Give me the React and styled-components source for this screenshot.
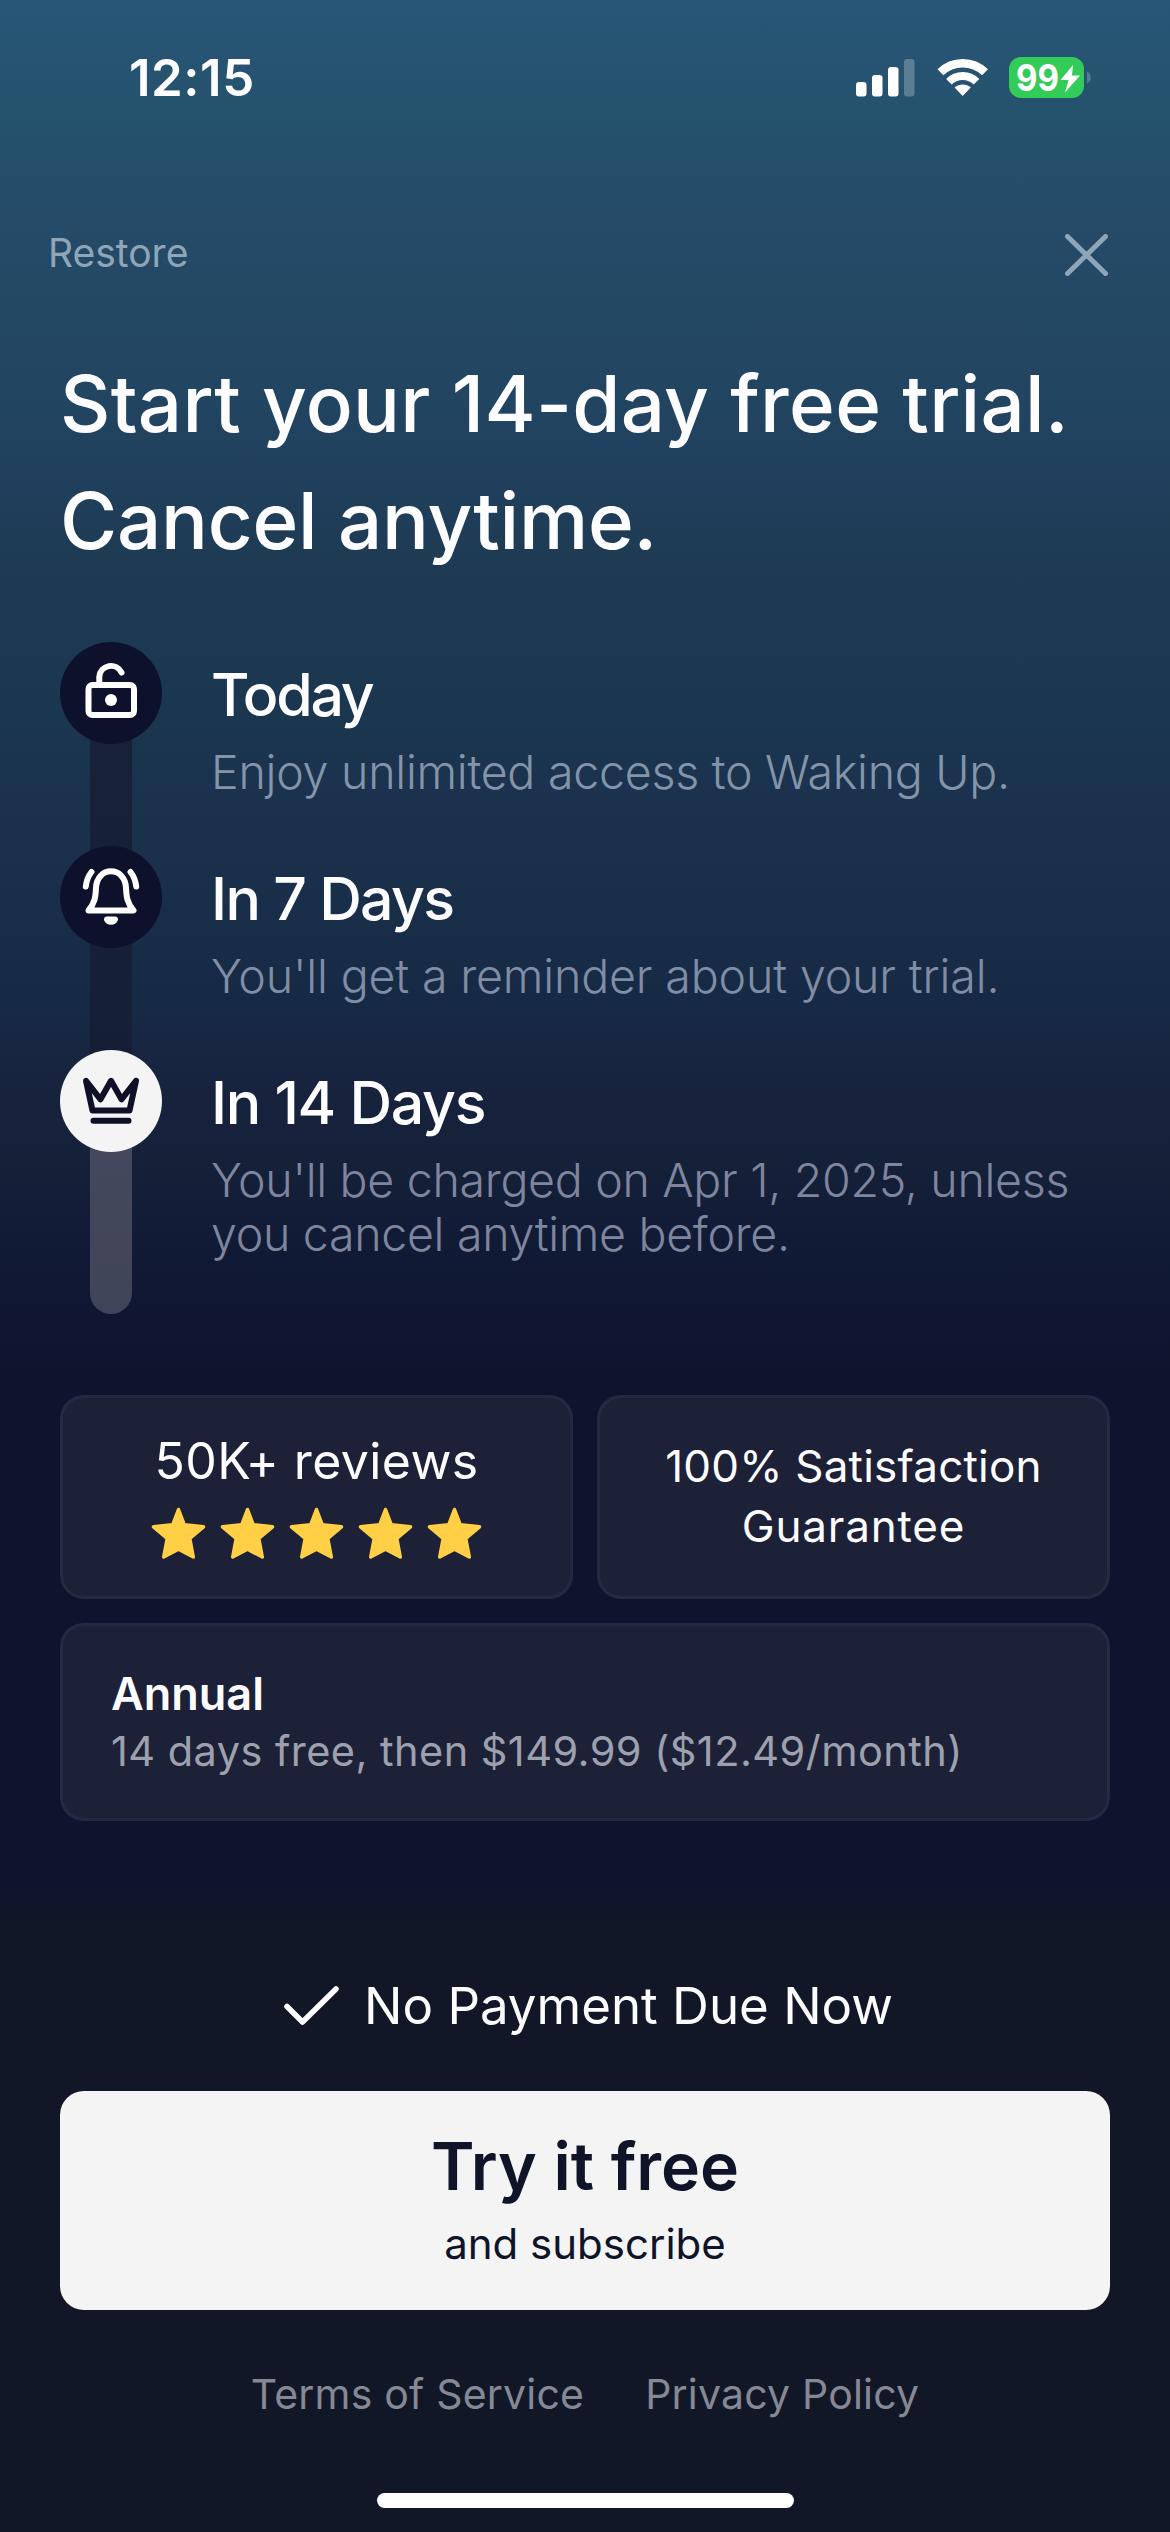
import React from "react";
import styled, { createGlobalStyle } from "styled-components";

const GlobalStyle = createGlobalStyle`
  * {
    box-sizing: border-box;
  }

  body {
    margin: 0;
    background: #0f142e;
  }
`;

const Screen = styled.div`
  display: flex;
  flex-direction: column;
  width: 1170px;
  height: 2532px;
  overflow: hidden;
  color: #fdfdff;
  font-family: Inter, "Liberation Sans", sans-serif;
  background: linear-gradient(
    180deg,
    #275677 0px,
    #25526d 110px,
    #254b68 220px,
    #224662 380px,
    #20405e 470px,
    #1e3b53 560px,
    #1b3850 680px,
    #1b334e 780px,
    #192e49 900px,
    #162a46 1000px,
    #182540 1060px,
    #152039 1160px,
    #111b35 1240px,
    #101632 1310px,
    #0f142e 1380px,
    #0f142e 1880px,
    #111726 1930px
  );
`;

const StatusBar = styled.div`
  display: flex;
  align-items: flex-start;
  justify-content: space-between;
  height: 234px;
  padding: 48px 77px 0 129px;
`;

const Clock = styled.div`
  font-size: 51px;
  font-weight: 600;
  line-height: 60px;
  letter-spacing: 0.5px;
`;

const StatusIcons = styled.div`
  display: flex;
  align-items: flex-start;
  gap: 20px;
  padding-top: 9px;
`;

const NavBar = styled.div`
  display: flex;
  justify-content: space-between;
  height: 102px;
  padding: 0 60px 0 48px;
`;

const RestoreLink = styled.a`
  font-size: 39px;
  line-height: 38px;
  color: #8fa6b8;
`;

const Title = styled.h1`
  height: 306px;
  margin: 0;
  padding: 9px 60px 0;
  font-size: 78px;
  font-weight: 500;
  line-height: 117px;
`;

const TitleLine = styled.span`
  display: block;
  letter-spacing: ${(props) => props.$spacing}px;
`;

const Timeline = styled.div`
  display: flex;
  flex-direction: column;
  position: relative;
  z-index: 0;
  height: 753px;
  padding: 0 60px;
`;

const Step = styled.div`
  display: flex;
  gap: 49px;
  height: ${(props) => props.$height}px;
`;

const Rail = styled.div`
  display: flex;
  flex-direction: column;
  align-items: center;
  width: 102px;
`;

const Badge = styled.div`
  display: flex;
  align-items: center;
  justify-content: center;
  flex: none;
  width: 102px;
  height: 102px;
  border-radius: 50%;
  background: ${(props) => (props.$light ? "#f4f4f5" : "#0d112c")};
`;

const Track = styled.div`
  flex: 1;
  width: 42px;
  /* tucked under the badges so no gap shows at the round edges */
  margin-top: -8px;
  margin-bottom: ${(props) => (props.$light ? 0 : -8)}px;
  position: relative;
  z-index: -1;
  border-radius: ${(props) => (props.$light ? "0 0 21px 21px" : "0")};
  background: ${(props) =>
    props.$light
      ? "linear-gradient(#42495f, #424658 60%, #40445a)"
      : "rgba(22, 27, 48, 0.7)"};
`;

const StepText = styled.div`
  padding-top: 17px;
`;

const StepTitle = styled.div`
  font-size: 59px;
  font-weight: 500;
  line-height: 72px;
  letter-spacing: ${(props) => props.$spacing}px;
`;

const StepNote = styled.div`
  margin-top: 14px;
  font-size: 46.5px;
  font-weight: 300;
  line-height: 54px;
  letter-spacing: ${(props) => props.$spacing}px;
  color: ${(props) => props.$color};
  white-space: nowrap;
`;

const Cards = styled.div`
  display: grid;
  grid-template-columns: 1fr 1fr;
  grid-template-rows: 204px 198px;
  gap: 24px;
  height: 569px;
  padding: 0 60px;
`;

const Card = styled.div`
  display: flex;
  flex-direction: column;
  align-items: center;
  padding-top: ${(props) => props.$top}px;
  border: 3px solid #252a42;
  border-radius: 24px;
  background: #1d2138;
`;

const PlanCard = styled(Card)`
  grid-column: 1 / 3;
  align-items: flex-start;
  padding-left: 48px;
`;

const Reviews = styled.div`
  font-size: 50px;
  line-height: 62px;
  letter-spacing: 0.4px;
`;

const Stars = styled.div`
  display: flex;
  gap: 14px;
  margin-top: 14px;
`;

const Guarantee = styled.div`
  font-size: 44px;
  line-height: 60px;
  letter-spacing: ${(props) => props.$spacing}px;
`;

const PlanName = styled.div`
  font-size: 45px;
  font-weight: 600;
  line-height: 54px;
`;

const PlanPrice = styled.div`
  font-size: 41.5px;
  line-height: 61px;
  letter-spacing: 0.45px;
  color: #9da0ad;
`;

const NoPayment = styled.div`
  display: flex;
  align-items: flex-start;
  justify-content: center;
  gap: 25px;
  height: 127px;
  padding: 11px 0 0 7px;
  font-size: 51px;
  line-height: 62px;

  svg {
    margin-top: 11px;
  }
`;

const TryButton = styled.button`
  display: flex;
  flex-direction: column;
  align-items: center;
  flex: none;
  height: 219px;
  margin: 0 60px;
  padding: 35px 0 0;
  border: 0;
  border-radius: 24px;
  color: #0f1428;
  background: #f4f4f4;
  font-family: inherit;
`;

const TryLabel = styled.span`
  font-size: 66px;
  font-weight: 600;
  line-height: 80px;
`;

const TryNote = styled.span`
  margin-top: 12px;
  font-size: 42px;
  line-height: 52px;
`;

const Legal = styled.div`
  display: flex;
  justify-content: center;
  gap: 61px;
  height: 183px;
  padding-top: 58px;
`;

const LegalLink = styled.a`
  font-size: 41px;
  line-height: 52px;
  letter-spacing: 0.2px;
  color: #858895;
`;

const HomeIndicator = styled.div`
  width: 417px;
  height: 15px;
  margin: 0 auto;
  border-radius: 8px;
  background: #fff;
`;

function SignalIcon() {
  return (
    <svg width="60" height="40" viewBox="0 0 60 40" fill="#fff">
      <rect x="0" y="25" width="10.5" height="14.5" rx="3" />
      <rect x="16" y="18" width="10.5" height="21.5" rx="3" />
      <rect x="32" y="10" width="10.5" height="29.5" rx="3" />
      <rect x="48" y="2" width="10.5" height="37.5" rx="3" opacity="0.25" />
    </svg>
  );
}

function WifiIcon() {
  return (
    <svg
      width="53"
      height="40"
      viewBox="0 0 53 40"
      fill="none"
      stroke="#fff"
      strokeWidth="8.5"
    >
      <path d="M4.4 15.3A32 32 0 0 1 49 15.3" />
      <path d="M12.9 24.8A19.3 19.3 0 0 1 40.5 24.8" strokeWidth="8" />
      <path
        d="M26.7 39L18.6 30.6A11.8 11.8 0 0 1 34.8 30.6Z"
        fill="#fff"
        stroke="none"
      />
    </svg>
  );
}

const BatterySvg = styled.svg`
  overflow: visible;
`;

function BatteryIcon() {
  return (
    <BatterySvg width="84" height="48" viewBox="0 0 84 48">
      <rect x="0" y="0" width="75" height="41" rx="12" fill="#33cc58" />
      <path d="M78 14.5c5 1.800 5 10.200 0 12z" fill="#55798f" />
      <text
        x="7"
        y="34"
        fill="#fff"
        fontFamily="Inter, sans-serif"
        fontSize="37"
        fontWeight="700"
        textLength="43"
        lengthAdjust="spacingAndGlyphs"
      >
        99
      </text>
      <path d="M64 8L51.5 23h8l-3.5 12.5L71 18.5h-8z" fill="#fff" />
    </BatterySvg>
  );
}

function CloseIcon() {
  return (
    <svg
      width="48"
      height="42"
      viewBox="0 0 48 42"
      stroke="#8fa6b8"
      strokeWidth="5"
      strokeLinecap="round"
    >
      <path d="M5.5 2.5L43.5 39.5M43.5 2.5L5.5 39.5" />
    </svg>
  );
}

function UnlockIcon() {
  return (
    <svg width="66" height="66" viewBox="0 0 66 66" fill="none" stroke="#fff">
      <rect x="10.5" y="25" width="45.5" height="30" rx="4" strokeWidth="6" />
      <path
        d="M21.3 25V16.7A11.7 11.7 0 0 1 43.5 12.5"
        strokeWidth="6"
        strokeLinecap="round"
      />
      <circle cx="33" cy="40" r="6" fill="#fff" stroke="none" />
    </svg>
  );
}

function BellIcon() {
  return (
    <svg
      width="66"
      height="66"
      viewBox="0 0 66 66"
      fill="none"
      stroke="#fff"
      strokeWidth="6"
      strokeLinecap="round"
      strokeLinejoin="round"
    >
      <path d="M10.5 46.5C17.5 38 17.5 32 18 24C18.8 1.8 47.2 1.8 48 24C48.5 32 48.5 38 55.5 46.5Z" />
      <path d="M29 55.5C30.5 58.5 35.5 58.5 37 55.5Z" />
      <path d="M13.5 8C10.3 12 8.5 16.5 7.8 22.5" />
      <path d="M52.5 8C55.7 12 57.5 16.5 58.2 22.5" />
    </svg>
  );
}

function CrownIcon() {
  return (
    <svg
      width="66"
      height="66"
      viewBox="0 0 66 66"
      fill="none"
      stroke="#100f28"
      strokeWidth="6"
      strokeLinecap="round"
      strokeLinejoin="round"
    >
      <path d="M8 12.8L14.5 42.5H51.5L58 12.8L43.5 31.3L33 12.8L22.5 31.3Z" />
      <path d="M15.5 52.8H50.5" />
    </svg>
  );
}

function StarIcon() {
  return (
    <svg width="55" height="55" viewBox="0 0 55 55">
      <path
        d="M27.5 3.5L33.3 18.8L52.5 20.8L38.8 32.5L42.3 51L27.5 43.2L12.7 51L16.2 32.5L2.5 20.8L21.7 18.8Z"
        fill="#ffd046"
        stroke="#ffd046"
        strokeWidth="3.5"
        strokeLinejoin="round"
      />
    </svg>
  );
}

function CheckIcon() {
  return (
    <svg
      width="55"
      height="40"
      viewBox="0 0 55 40"
      fill="none"
      stroke="#fdfdff"
      strokeWidth="5.5"
      strokeLinecap="round"
      strokeLinejoin="round"
    >
      <path d="M3 20.5L18.5 36L52 3" />
    </svg>
  );
}

function App() {
  return (
    <Screen>
      <GlobalStyle />
      <StatusBar>
        <Clock>12:15</Clock>
        <StatusIcons>
          <SignalIcon />
          <WifiIcon />
          <BatteryIcon />
        </StatusIcons>
      </StatusBar>

      <NavBar>
        <RestoreLink>Restore</RestoreLink>
        <CloseIcon />
      </NavBar>

      <Title>
        <TitleLine $spacing={0.27}>Start your 14-day free trial.</TitleLine>
        <TitleLine $spacing={-0.25}>Cancel anytime.</TitleLine>
      </Title>

      <Timeline>
        <Step $height={204}>
          <Rail>
            <Badge>
              <UnlockIcon />
            </Badge>
            <Track />
          </Rail>
          <StepText>
            <StepTitle $spacing={-2.2}>Today</StepTitle>
            <StepNote $color="#8494a9" $spacing={-0.25}>
              Enjoy unlimited access to Waking Up.
            </StepNote>
          </StepText>
        </Step>
        <Step $height={204}>
          <Rail>
            <Badge>
              <BellIcon />
            </Badge>
            <Track />
          </Rail>
          <StepText>
            <StepTitle $spacing={-1.7}>In 7 Days</StepTitle>
            <StepNote $color="#808da5" $spacing={-0.15}>
              You'll get a reminder about your trial.
            </StepNote>
          </StepText>
        </Step>
        <Step $height={264}>
          <Rail>
            <Badge $light>
              <CrownIcon />
            </Badge>
            <Track $light />
          </Rail>
          <StepText>
            <StepTitle $spacing={-1.3}>In 14 Days</StepTitle>
            <StepNote $color="#7f859d" $spacing={-0.3}>
              You'll be charged on Apr 1, 2025, unless
              <br />
              you cancel anytime before.
            </StepNote>
          </StepText>
        </Step>
      </Timeline>

      <Cards>
        <Card $top={32}>
          <Reviews>50K+ reviews</Reviews>
          <Stars>
            {[1, 2, 3, 4, 5].map((n) => (
              <StarIcon key={n} />
            ))}
          </Stars>
        </Card>
        <Card $top={38}>
          <Guarantee $spacing={0.2}>100% Satisfaction</Guarantee>
          <Guarantee $spacing={0.8}>Guarantee</Guarantee>
        </Card>
        <PlanCard $top={41}>
          <PlanName>Annual</PlanName>
          <PlanPrice>14 days free, then $149.99 ($12.49/month)</PlanPrice>
        </PlanCard>
      </Cards>

      <NoPayment>
        <CheckIcon />
        No Payment Due Now
      </NoPayment>
      <TryButton>
        <TryLabel>Try it free</TryLabel>
        <TryNote>and subscribe</TryNote>
      </TryButton>
      <Legal>
        <LegalLink>Terms of Service</LegalLink>
        <LegalLink>Privacy Policy</LegalLink>
      </Legal>
      <HomeIndicator />
    </Screen>
  );
}

export default App;
